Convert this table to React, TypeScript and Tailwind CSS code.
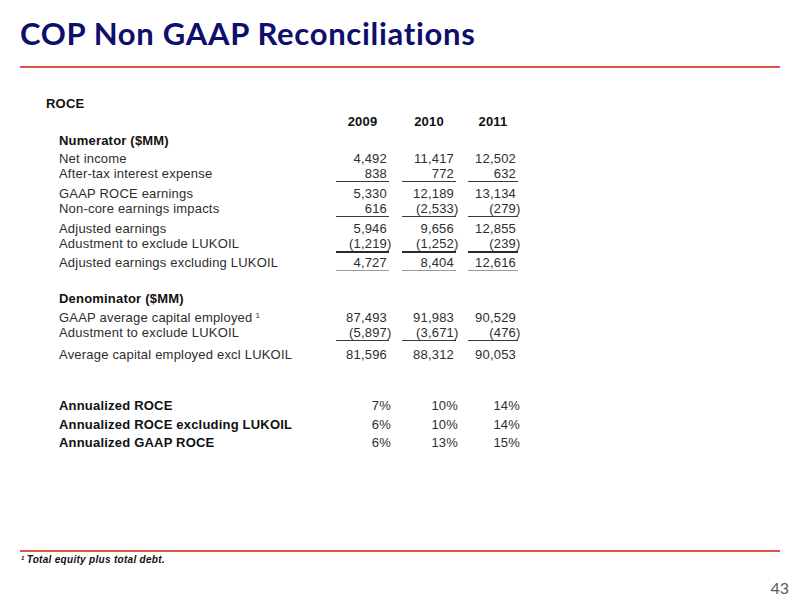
import React from 'react'

type Row = {
  label: string
  values?: string[]
  bold?: boolean
  pct?: boolean
  sup?: boolean
  mt: string
  line?: 'single' | 'double' | 'gray'
}

// Numerator / denominator lines, top margins tuned to the slide
const rows: Row[] = [
  { label: 'Numerator ($MM)', bold: true, mt: 'mt-[4px]' },
  { label: 'Net income', values: ['4,492', '11,417', '12,502'], mt: 'mt-[3px]' },
  { label: 'After-tax interest expense', values: ['838', '772', '632'], mt: 'mt-0', line: 'single' },
  { label: 'GAAP ROCE earnings', values: ['5,330', '12,189', '13,134'], mt: 'mt-[4px]' },
  { label: 'Non-core earnings impacts', values: ['616', '(2,533)', '(279)'], mt: 'mt-0', line: 'single' },
  { label: 'Adjusted earnings', values: ['5,946', '9,656', '12,855'], mt: 'mt-[4px]' },
  { label: 'Adustment to exclude LUKOIL', values: ['(1,219)', '(1,252)', '(239)'], mt: 'mt-0', line: 'double' },
  { label: 'Adjusted earnings excluding LUKOIL', values: ['4,727', '8,404', '12,616'], mt: 'mt-[2px]', line: 'gray' },
  { label: 'Denominator ($MM)', bold: true, mt: 'mt-[20px]' },
  { label: 'GAAP average capital employed', sup: true, values: ['87,493', '91,983', '90,529'], mt: 'mt-[4px]' },
  { label: 'Adustment to exclude LUKOIL', values: ['(5,897)', '(3,671)', '(476)'], mt: 'mt-0', line: 'single' },
  { label: 'Average capital employed excl LUKOIL', values: ['81,596', '88,312', '90,053'], mt: 'mt-[6px]' },
  { label: 'Annualized ROCE', bold: true, pct: true, values: ['7%', '10%', '14%'], mt: 'mt-[36px]' },
  { label: 'Annualized ROCE excluding LUKOIL', bold: true, pct: true, values: ['6%', '10%', '14%'], mt: 'mt-[4px]' },
  { label: 'Annualized GAAP ROCE', bold: true, pct: true, values: ['6%', '13%', '15%'], mt: 'mt-[3px]' },
]

const colWidths = ['w-[53px]', 'w-[54px] ml-[13px]', 'w-[50px] ml-[12px]']

const lineClass = (line?: Row['line']) => {
  if (line === 'single') return 'border-b border-[#3a3a3a]'
  if (line === 'double') return 'border-b-2 border-[#2a2a2a]'
  if (line === 'gray') return 'border-b border-[#9a9a9a]'
  return ''
}

const Value = ({ v, pct }: { v: string; pct?: boolean }) => {
  if (pct) return <span className="-mr-[4px]">{v}</span>
  const neg = v.startsWith('(')
  const num = neg ? v.slice(0, -1) : v
  return (
    <>
      {num}
      <span className="inline-block w-0 text-left">{neg ? ')' : ''}</span>
    </>
  )
}

export default function App() {
  return (
    <div className="w-[800px] h-[600px] bg-white overflow-hidden flex flex-col font-['Liberation_Sans',Arial,sans-serif]">
      {/* Title */}
      <h1 className="mt-[15px] pl-[20px] h-[36px] leading-[36px] text-[31px] tracking-[0.7px] font-bold text-[#0e0e6c] font-['Lato','Open_Sans',sans-serif]">
        COP Non GAAP Reconciliations
      </h1>
      <div className="mt-[15px] mx-[20px] h-[2px] bg-[#dc5843]" />

      {/* ROCE table */}
      <div className="mt-[28px] pl-[46px] h-[15px] leading-[15px] text-[13px] tracking-[0.2px] font-bold text-[#111]">ROCE</div>

      <div className="mt-[3px] pl-[59px] flex h-[15px] leading-[15px] text-[13px] tracking-[0.2px] font-bold text-[#111]">
        <div className="w-[277px]" />
        {['2009', '2010', '2011'].map((y, i) => (
          <div key={y} className={`${colWidths[i]} text-center`}>{y}</div>
        ))}
      </div>

      {rows.map((r, idx) => (
        <div
          key={idx}
          className={`${r.mt} pl-[59px] flex leading-[15px] text-[13px] tracking-[0.2px] ${r.bold ? 'font-bold text-[#111]' : 'text-[#2e2e2e]'}`}
        >
          <div className="w-[277px] whitespace-nowrap">
            {r.label}
            {r.sup && <sup className="ml-[3px] text-[8px] font-normal">1</sup>}
          </div>
          {r.values?.map((v, i) => (
            <div
              key={i}
              className={`${colWidths[i]} text-right pr-[2px] whitespace-nowrap ${r.pct ? 'font-normal text-[#2e2e2e]' : ''} ${lineClass(r.line)}`}
            >
              <Value v={v} pct={r.pct} />
            </div>
          ))}
        </div>
      ))}

      {/* Footer */}
      <div className="mt-[100px] mx-[20px] h-[2px] bg-[#dc5843]" />
      <div className="mt-[2px] pl-[21px] h-[11px] leading-[11px] text-[10px] tracking-[0.3px] font-bold italic text-[#111]">
        <sup className="text-[6px] mr-[2px]">1</sup>Total equity plus total debt.
      </div>
      <div className="mt-[13px] pr-[11px] text-right h-[20px] leading-[20px] text-[16px] text-[#595959] font-['Lato','Open_Sans',sans-serif]">
        43
      </div>
    </div>
  )
}
